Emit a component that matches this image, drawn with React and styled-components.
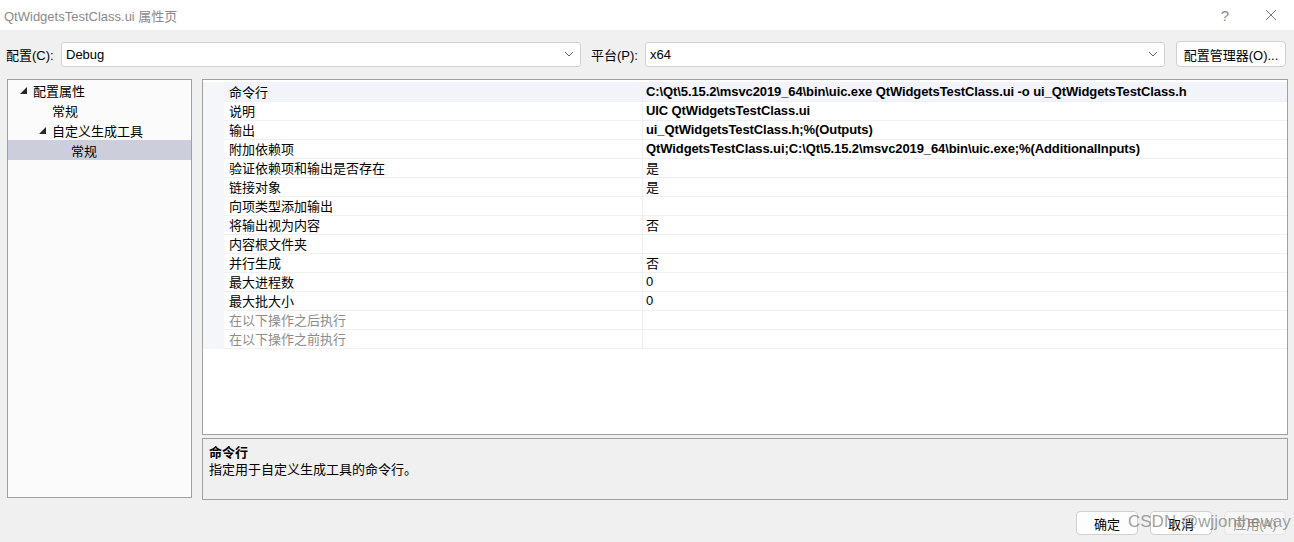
import React from 'react';
import styled, { createGlobalStyle } from 'styled-components';

const GlobalStyle = createGlobalStyle`
    html, body {
        margin: 0;
        padding: 0;
        background: #f0f0f0;
    }
    body {
        font-family: "Liberation Sans", "Noto Sans CJK SC", sans-serif;
        font-size: 13px;
        color: #000;
    }
`;

/////

const Window = styled.div`
    width: 1294px;
    height: 542px;
    background: #f0f0f0;
    display: flex;
    flex-direction: column;
    position: relative;
    overflow: hidden;
`;

const TitleBar = styled.div`
    height: 30px;
    background: #fff;
    display: flex;
    align-items: center;
    padding-left: 4px;
    .title{
        color: #8a8a8a;
        font-size: 13px;
        flex: 1;
    }
    .ctrl{
        width: 46px;
        display: flex;
        justify-content: center;
        color: #8a8a8a;
    }
`;

const ConfigRow = styled.div`
    display: flex;
    align-items: center;
    height: 26px;
    margin-top: 11px;
    padding-left: 6px;
`;

const Label = styled.div`
    width: ${(p) => p.w}px;
    flex-shrink: 0;
`;

const Select = styled.div`
    width: 520px;
    height: 25px;
    box-sizing: border-box;
    background: #fff;
    border: 1px solid #d0d0d0;
    border-radius: 3px;
    display: flex;
    align-items: center;
    padding-left: 4px;
    margin-right: ${(p) => p.mr}px;
    flex-shrink: 0;
    .val{
        flex: 1;
    }
    svg{
        margin-right: 6px;
    }
`;

const Button = styled.div`
    width: ${(p) => p.w}px;
    height: ${(p) => p.h}px;
    box-sizing: border-box;
    flex-shrink: 0;
    border: 1px solid ${(p) => (p.disabled ? '#e6e6e6' : '#d0d0d0')};
    background: ${(p) => (p.disabled ? '#f5f5f5' : '#fdfdfd')};
    color: ${(p) => (p.disabled ? '#9a9a9a' : '#000')};
    border-radius: 4px;
    display: flex;
    align-items: center;
    justify-content: center;
    font-size: 13px;
`;

const Main = styled.div`
    display: flex;
    margin-top: 12px;
    padding-left: 7px;
    gap: 10px;
`;

const Tree = styled.div`
    width: 185px;
    height: 419px;
    box-sizing: border-box;
    border: 1px solid #a0a0a0;
    background: #fbfbfb;
`;

const TreeItem = styled.div`
    height: 20px;
    display: flex;
    align-items: center;
    padding-left: ${(p) => p.indent}px;
    background: ${(p) => (p.selected ? '#cccedb' : 'transparent')};
    .arrow{
        width: 19px;
        display: flex;
        justify-content: center;
    }
`;

const RightCol = styled.div`
    width: 1086px;
    display: flex;
    flex-direction: column;
    gap: 3px;
`;

const Grid = styled.div`
    height: 356px;
    box-sizing: border-box;
    border: 1px solid #a0a0a0;
    background: #fff;
    padding-top: 2px;
`;

const Row = styled.div`
    display: grid;
    grid-template-columns: 21px 419px 1fr;
    height: 19px;
    background: ${(p) => (p.selected ? '#f3f4f9' : '#fff')};
    .margin{
        background: #f5f6f9;
    }
    .name, .value{
        display: flex;
        align-items: center;
        padding-left: 5px;
        border-bottom: 1px solid #f0f0f4;
        box-sizing: border-box;
        white-space: nowrap;
    }
    .name{
        color: ${(p) => (p.dim ? '#8d8d8d' : '#000')};
        border-right: 1px solid #f0f0f4;
    }
    .value{
        padding-left: 3px;
        font-weight: ${(p) => (p.bold ? 'bold' : 'normal')};
        font-size: 13px;
        letter-spacing: ${(p) => (p.bold ? '-0.1px' : '0')};
    }
`;

const Desc = styled.div`
    height: 62px;
    box-sizing: border-box;
    border: 1px solid #a0a0a0;
    background: #f0f0f0;
    padding: 5px 6px;
    line-height: 17px;
    .head{
        font-weight: bold;
    }
`;

const Footer = styled.div`
    display: flex;
    justify-content: flex-end;
    gap: 12px;
    margin-top: 11px;
    padding-right: 8px;
`;

const Watermark = styled.div`
    position: absolute;
    left: 1128px;
    top: 512px;
    font-family: "Liberation Sans", sans-serif;
    font-size: 17px;
    color: rgba(120, 120, 120, 0.7);
    pointer-events: none;
    white-space: nowrap;
`;

/////////////

const Chevron = () => (
    <svg width="10" height="6" viewBox="0 0 10 6">
        <path d="M1 1 L5 5 L9 1" fill="none" stroke="#666" strokeWidth="1" />
    </svg>
);

const Expander = () => (
    <svg width="7" height="7" viewBox="0 0 7 7">
        <path d="M7 0 L7 7 L0 7 Z" fill="#262626" />
    </svg>
);

const rows = [
    { name: '命令行', value: 'C:\\Qt\\5.15.2\\msvc2019_64\\bin\\uic.exe QtWidgetsTestClass.ui -o ui_QtWidgetsTestClass.h', bold: true, selected: true },
    { name: '说明', value: 'UIC QtWidgetsTestClass.ui', bold: true },
    { name: '输出', value: 'ui_QtWidgetsTestClass.h;%(Outputs)', bold: true },
    { name: '附加依赖项', value: 'QtWidgetsTestClass.ui;C:\\Qt\\5.15.2\\msvc2019_64\\bin\\uic.exe;%(AdditionalInputs)', bold: true },
    { name: '验证依赖项和输出是否存在', value: '是' },
    { name: '链接对象', value: '是' },
    { name: '向项类型添加输出', value: '' },
    { name: '将输出视为内容', value: '否' },
    { name: '内容根文件夹', value: '' },
    { name: '并行生成', value: '否' },
    { name: '最大进程数', value: '0' },
    { name: '最大批大小', value: '0' },
    { name: '在以下操作之后执行', value: '', dim: true },
    { name: '在以下操作之前执行', value: '', dim: true },
];

const App = () => {
    return (
        <Window>
            <GlobalStyle />

            <TitleBar>
                <div className="title">QtWidgetsTestClass.ui 属性页</div>
                <div className="ctrl" style={{ fontSize: '15px' }}>?</div>
                <div className="ctrl">
                    <svg width="12" height="12" viewBox="0 0 12 12">
                        <path d="M1 1 L11 11 M11 1 L1 11" stroke="#777" strokeWidth="1" />
                    </svg>
                </div>
            </TitleBar>

            {/* 配置 / 平台 */}
            <ConfigRow>
                <Label w={55}>配置(C):</Label>
                <Select mr={10}>
                    <span className="val">Debug</span>
                    <Chevron />
                </Select>
                <Label w={54}>平台(P):</Label>
                <Select mr={11}>
                    <span className="val">x64</span>
                    <Chevron />
                </Select>
                <Button w={110} h={26}>配置管理器(O)...</Button>
            </ConfigRow>

            <Main>
                <Tree>
                    <TreeItem indent={6}><span className="arrow"><Expander /></span>配置属性</TreeItem>
                    <TreeItem indent={44}>常规</TreeItem>
                    <TreeItem indent={25}><span className="arrow"><Expander /></span>自定义生成工具</TreeItem>
                    <TreeItem indent={63} selected>常规</TreeItem>
                </Tree>

                <RightCol>
                    <Grid>
                        {rows.map((r) => (
                            <Row key={r.name} bold={r.bold} dim={r.dim} selected={r.selected}>
                                <div className="margin" />
                                <div className="name">{r.name}</div>
                                <div className="value">{r.value}</div>
                            </Row>
                        ))}
                    </Grid>
                    <Desc>
                        <div className="head">命令行</div>
                        <div>指定用于自定义生成工具的命令行。</div>
                    </Desc>
                </RightCol>
            </Main>

            <Footer>
                <Button w={62} h={24}>确定</Button>
                <Button w={62} h={24}>取消</Button>
                <Button w={62} h={24} disabled>应用(A)</Button>
            </Footer>

            <Watermark>CSDN @wjjontheway</Watermark>
        </Window>
    );
};

export default App;
